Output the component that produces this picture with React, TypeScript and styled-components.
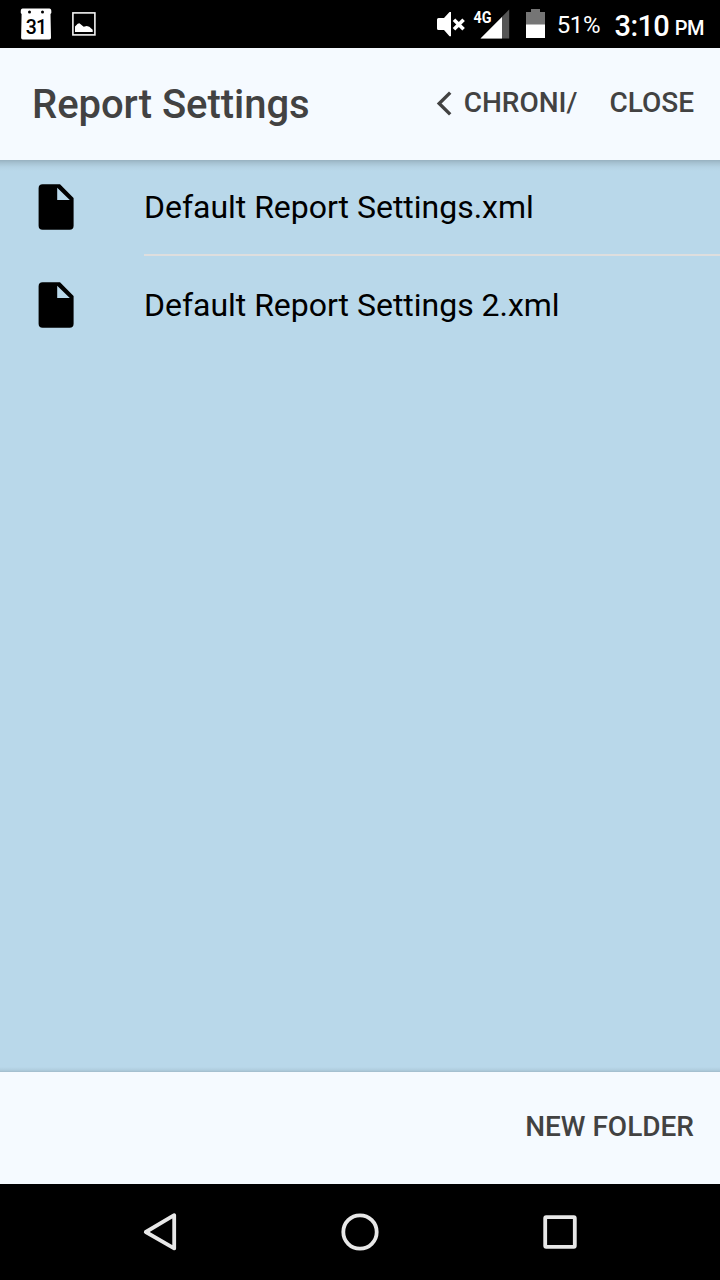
import React from "react";
import styled, { createGlobalStyle } from "styled-components";

const GlobalStyle = createGlobalStyle`
  * { box-sizing: border-box; }
  body { margin: 0; background: #000; font-family: Roboto, sans-serif; }
  svg { display: block; flex: none; }
`;

const Screen = styled.div`
  display: flex;
  flex-direction: column;
  width: 720px;
  height: 1280px;
  overflow: hidden;
`;

const StatusBar = styled.div`
  display: flex;
  align-items: flex-start;
  justify-content: space-between;
  height: 48px;
  flex: none;
  padding: 0 16px 0 20px;
  background: #000;
  color: #fff;
`;

const StatusGroup = styled.div`
  display: flex;
  height: 48px;
`;

const StatusText = styled.span<{ $size: number; $top: number; $left?: number; $weight?: number; $spacing?: number }>`
  font-size: ${(p) => p.$size}px;
  line-height: 32px;
  margin: ${(p) => p.$top}px 0 0 ${(p) => p.$left ?? 0}px;
  font-weight: ${(p) => p.$weight ?? 400};
  letter-spacing: ${(p) => p.$spacing ?? 0}px;
  white-space: nowrap;
`;

const StatusSpacer = styled.span<{ $w: number }>`
  width: ${(p) => p.$w}px;
  flex: none;
`;

const Header = styled.header`
  display: flex;
  align-items: center;
  height: 112px;
  flex: none;
  padding: 2px 26px 0 32px;
  background: #f5faff;
  color: #424242;
`;

const Title = styled.h1`
  flex: 1;
  margin: 0;
  font-size: 40px;
  line-height: 48px;
  font-weight: 500;
  letter-spacing: -0.04px;
`;

const BarButton = styled.button<{ $gap?: number }>`
  display: flex;
  align-items: center;
  border: 0;
  padding: 0;
  margin: 0 0 4px ${(p) => p.$gap ?? 0}px;
  background: none;
  color: #424242;
  font: 500 28px/32px Roboto, sans-serif;
  text-transform: uppercase;
  white-space: nowrap;
`;

const Content = styled.main`
  flex: 1;
  background:
    linear-gradient(to bottom, rgba(0, 0, 0, 0.18), rgba(0, 0, 0, 0.1) 3px, rgba(0, 0, 0, 0.03) 7px, transparent 11px),
    linear-gradient(to top, rgba(0, 0, 0, 0.13), rgba(0, 0, 0, 0.05) 2px, transparent 5px),
    #b9d8ea;
`;

const FileRow = styled.div`
  display: flex;
  height: 98px;
  padding-left: 38px;
`;

const FileIconSlot = styled.div`
  width: 106px;
  padding-top: 24px;
`;

const FileLabel = styled.div<{ $divider?: boolean }>`
  flex: 1;
  height: 96px;
  padding-bottom: 2px;
  border-bottom: 2px solid ${(p) => (p.$divider ? "#dedede" : "transparent")};
  color: #000;
  font-size: 32px;
  line-height: 94px;
  letter-spacing: -0.02px;
`;

const Footer = styled.footer`
  display: flex;
  align-items: center;
  justify-content: flex-end;
  height: 112px;
  flex: none;
  padding: 2px 26px 0 0;
  background: #f5faff;
`;

const NavBar = styled.nav`
  display: flex;
  align-items: center;
  justify-content: center;
  gap: 160px;
  height: 96px;
  flex: none;
  background: #000;
`;

const CalendarIcon = () => (
  <svg width="32" height="48" viewBox="20 0 32 48">
    <path
      d="M22.500 8.600h27q1.500 0 1.700 1.500l.2 2.200q0 1-.9 1.700l.5 23.800q0 1.700-1.700 1.700H22.800q-1.700 0-1.700-1.700l.5-23.800q-.9-.7-.9-1.700l.2-2.200q.2-1.500 1.600-1.500z"
      fill="#fff"
    />
    <circle cx="29.500" cy="12" r="1.500" />
    <circle cx="42.500" cy="12" r="1.500" />
    <text x="36" y="33.600" textAnchor="middle" fontFamily="Roboto, sans-serif" fontSize="19.500" fontWeight="500" letterSpacing="-.8">31</text>
  </svg>
);

const PictureIcon = () => (
  <svg width="24" height="48" viewBox="72 0 24 48">
    <rect x="72.900" y="12.900" width="22" height="22" fill="none" stroke="#f4f4f4" strokeWidth="1.600" />
    <path d="M75 32v-5.500l2.700-2.700 1.700-.6 4.300 3.600 3-.9 2.600.8 3.400 3V32z" fill="#fff" />
  </svg>
);

const MuteIcon = () => (
  <svg width="30" height="48" viewBox="436 0 30 48">
    <path d="M438.500 18h5.500l5.500-6h1.500v24.300h-1.500l-5.500-6.300h-5.500q-1.500 0-1.500-1.500v-9q0-1.500 1.500-1.500z" fill="#fff" />
    <path d="M454 19.700l9.600 9.600M463.600 19.700l-9.600 9.600" stroke="#fff" strokeWidth="3.600" />
  </svg>
);

const SignalIcon = () => (
  <svg width="38" height="48" viewBox="473 0 38 48">
    <path d="M509.200 9.500v29H480.500z" fill="#555" />
    <path d="M502 16.900v21.600h-21.500z" fill="#fff" />
    <text x="473.600" y="22.600" fill="#fff" fontFamily="Roboto, sans-serif" fontSize="16.500" fontWeight="700" textLength="18" lengthAdjust="spacingAndGlyphs">4G</text>
  </svg>
);

const BatteryIcon = () => (
  <svg width="20" height="48" viewBox="526 0 20 48">
    <path d="M526 12h5V9h9v3h5v13h-19z" fill="#757575" />
    <path d="M526 24.500h19V38h-19z" fill="#fff" />
  </svg>
);

const ChevronIcon = () => (
  <svg width="28" height="32" viewBox="436 87 28 32">
    <path d="M450.200 92.600L439.200 103.500l11 10.900" fill="none" stroke="#424242" strokeWidth="3.400" />
  </svg>
);

const FileIcon = () => (
  <svg width="36" height="46" viewBox="0 0 36 46">
    <path
      fillRule="evenodd"
      d="M4 .2h18L35.600 14v27.800q0 4-4 4H4.600q-4 0-4-4V4.200q0-4 4-4zM19.200 3.800V16h12.600z"
    />
  </svg>
);

const files = ["Default Report Settings.xml", "Default Report Settings 2.xml"];

export default function App() {
  return (
    <Screen>
      <GlobalStyle />
      <StatusBar>
        <StatusGroup>
          <CalendarIcon />
          <StatusSpacer $w={20} />
          <PictureIcon />
        </StatusGroup>
        <StatusGroup>
          <MuteIcon />
          <StatusSpacer $w={7} />
          <SignalIcon />
          <StatusSpacer $w={15} />
          <BatteryIcon />
          <StatusText $size={24} $top={9} $left={10.5} $spacing={-0.45}>51%</StatusText>
          <StatusText $size={29} $top={10} $left={14.5} $weight={500} $spacing={-0.6}>3:10</StatusText>
          <StatusText $size={20} $top={12} $left={5.5} $weight={500} $spacing={-0.5}>PM</StatusText>
        </StatusGroup>
      </StatusBar>
      <Header>
        <Title>Report Settings</Title>
        <BarButton>
          <ChevronIcon />
          Chroni/
        </BarButton>
        <BarButton $gap={32}>Close</BarButton>
      </Header>
      <Content>
        {files.map((name, i) => (
          <FileRow key={name}>
            <FileIconSlot>
              <FileIcon />
            </FileIconSlot>
            <FileLabel $divider={i < files.length - 1}>{name}</FileLabel>
          </FileRow>
        ))}
      </Content>
      <Footer>
        <BarButton>New Folder</BarButton>
      </Footer>
      <NavBar>
        <svg width="40" height="40" viewBox="140 1212 40 40">
          <path d="M174.200 1215.200v33.200L145.800 1232z" fill="none" stroke="#e8e8e8" strokeWidth="3.800" strokeLinejoin="round" />
        </svg>
        <svg width="40" height="40" viewBox="340 1212 40 40">
          <circle cx="360" cy="1232" r="16.700" fill="none" stroke="#e8e8e8" strokeWidth="3.800" />
        </svg>
        <svg width="40" height="40" viewBox="540 1212 40 40">
          <rect x="545.200" y="1217.200" width="29.600" height="29.600" rx="1" fill="none" stroke="#e8e8e8" strokeWidth="3.800" />
        </svg>
      </NavBar>
    </Screen>
  );
}
